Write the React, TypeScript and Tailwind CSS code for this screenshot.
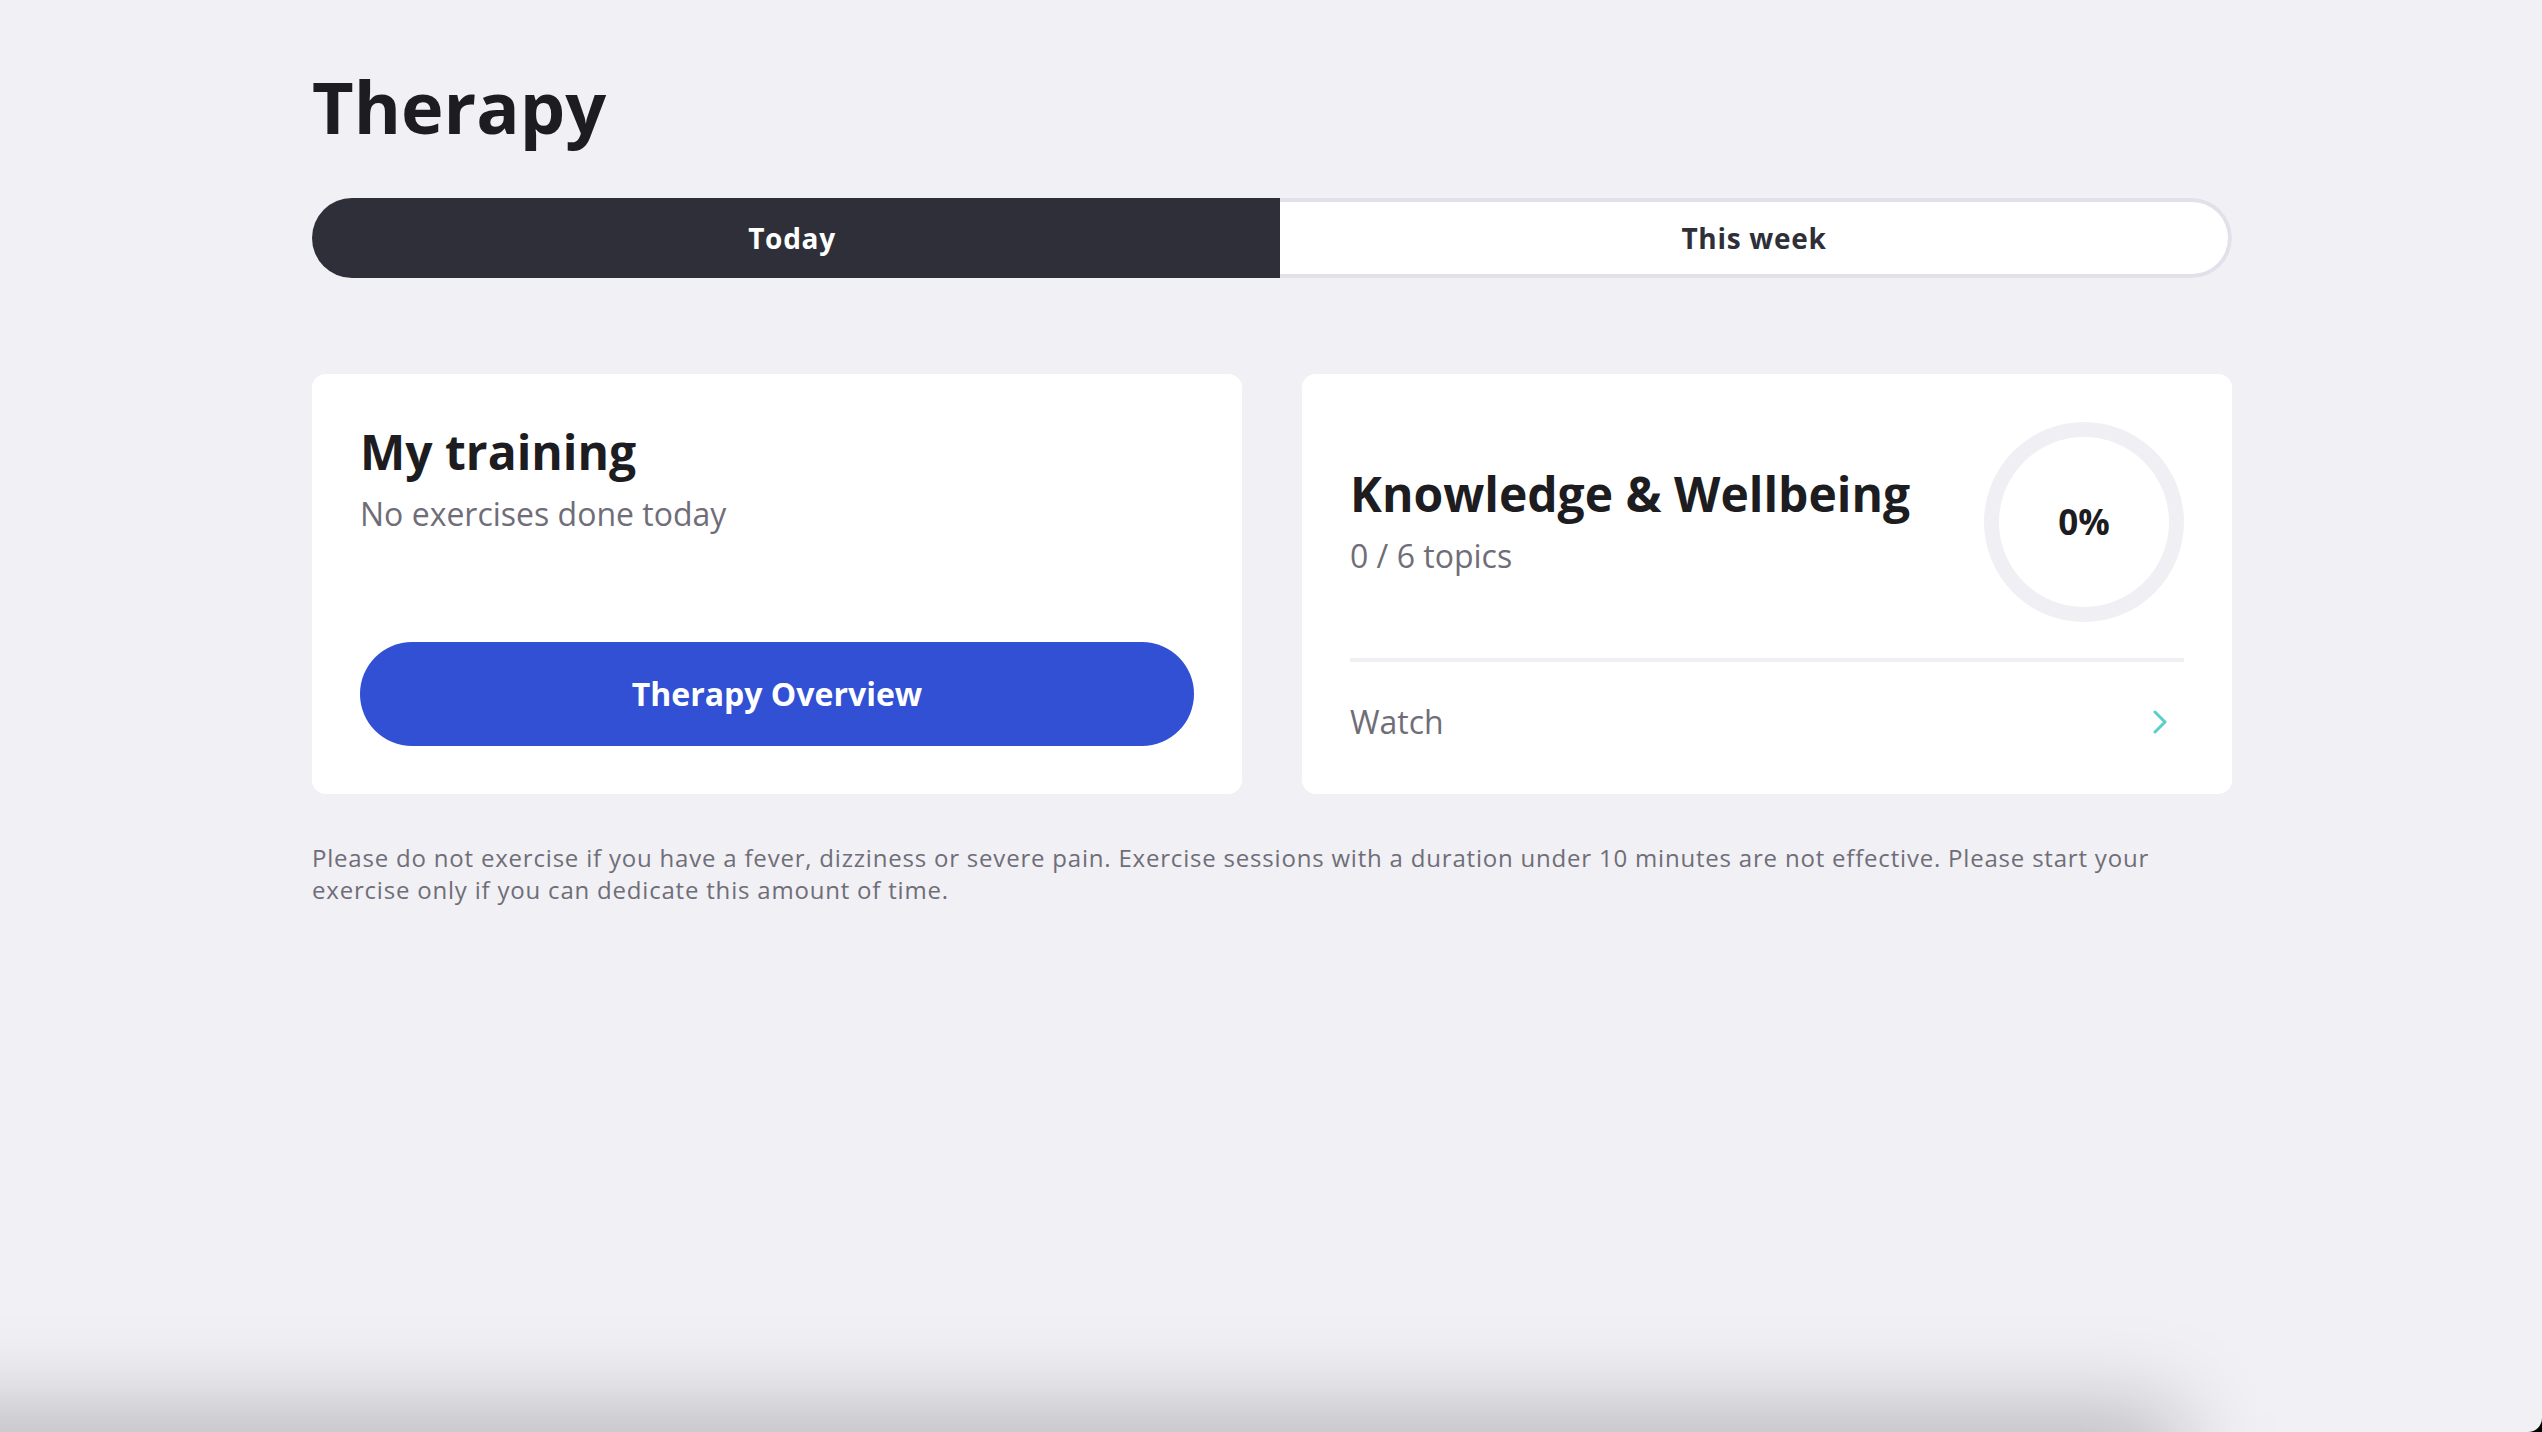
import { useState } from 'react';

type Tab = 'today' | 'week';

function ProgressRing({ percent }: { percent: number }) {
  return (
    <div className="w-[200px] h-[200px] shrink-0 rounded-full border-[15px] border-[#f0eff4] flex items-center justify-center">
      <span className="text-[35px] font-bold text-[#1d1c21]">{percent}%</span>
    </div>
  );
}

export default function App() {
  const [tab, setTab] = useState<Tab>('today');

  return (
    <div className="min-h-screen bg-black font-['Open_Sans',sans-serif]">
      <div className="relative min-h-screen overflow-hidden bg-[#f1f0f5] rounded-br-[14px]">
        <div className="w-[1920px] ml-[312px] pt-[70px]">
          {/* Header */}
          <h1 className="text-[72px] leading-[72px] font-bold text-[#1d1c21]">Therapy</h1>

          {/* Tabs */}
          <div className="mt-[56px] h-[80px] flex rounded-full overflow-hidden">
            <button
              onClick={() => setTab('today')}
              className={`w-[968px] h-full pr-2 text-[28px] font-bold tracking-wide
                ${tab === 'today' ? 'bg-[#2e2f38] text-white' : 'bg-white text-[#2e2f38] border-4 border-r-0 border-[#e2e0ea] rounded-l-full'}`}
            >Today</button>
            <button
              onClick={() => setTab('week')}
              className={`flex-1 h-full text-[28px] font-bold tracking-wide
                ${tab === 'week' ? 'bg-[#2e2f38] text-white' : 'bg-white text-[#2e2f38] border-4 border-l-0 border-[#e2e0ea] rounded-r-full'}`}
            >This week</button>
          </div>

          {/* Cards */}
          <div className="mt-[96px] grid grid-cols-2 gap-[60px]">
            <div className="h-[420px] bg-white rounded-[14px] p-12 flex flex-col justify-between">
              <div>
                <h2 className="text-[48px] leading-[60px] font-bold text-[#1d1c21]">My training</h2>
                <p className="mt-3 text-[32px] leading-[40px] text-[#6f6e78]">No exercises done today</p>
              </div>
              <button className="h-[104px] w-full rounded-full bg-[#3150d4] text-white text-[32px] font-bold">
                Therapy Overview
              </button>
            </div>

            <div className="h-[420px] bg-white rounded-[14px] px-12 pt-12 flex flex-col">
              <div className="flex items-center justify-between">
                <div className="pb-1">
                  <h2 className="text-[48px] leading-[60px] font-bold text-[#1d1c21]">Knowledge &amp; Wellbeing</h2>
                  <p className="mt-3 text-[32px] leading-[40px] text-[#6f6e78]">0 / 6 topics</p>
                </div>
                <ProgressRing percent={0} />
              </div>
              <div className="mt-9 h-1 bg-[#f0eff4]" />
              <div className="pt-10 flex items-center justify-between">
                <span className="text-[32px] leading-[40px] text-[#6f6e78]">Watch</span>
                <svg width="16" height="24" viewBox="0 0 16 24" className="mr-4" fill="none">
                  <path d="M3 2 L13 12 L3 22" stroke="#5ccfc4" strokeWidth="3" strokeLinecap="round" strokeLinejoin="round" />
                </svg>
              </div>
            </div>
          </div>

          {/* Disclaimer */}
          <p className="mt-12 text-[24px] leading-[32px] tracking-[0.8px] text-[#6f6e78]">
            Please do not exercise if you have a fever, dizziness or severe pain. Exercise sessions with a duration under 10 minutes are not effective. Please start your exercise only if you can dedicate this amount of time.
          </p>
        </div>

        {/* bottom shade */}
        <div className="absolute left-[-200px] w-[2380px] bottom-[-70px] h-[90px] bg-black/25 blur-[45px] pointer-events-none" />
      </div>
    </div>
  );
}
